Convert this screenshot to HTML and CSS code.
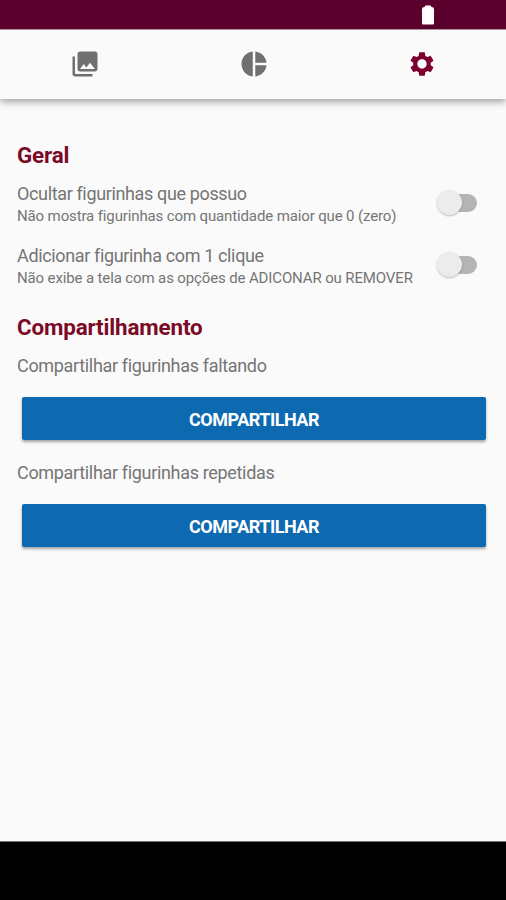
FILE: index.html
```
<!DOCTYPE html>
<html lang="pt-BR">
<head>
    <meta charset="UTF-8">
    <meta name="viewport" content="width=device-width, initial-scale=1.0">
    <title>Configurações</title>
    <link rel="stylesheet" href="styles.css">
</head>
<body>
    <!-- Barra de status -->
    <div class="status-bar">
        <svg class="battery" viewBox="0 0 12 20"><path d="M3.500 0.500h5l1 1.500q2.500 0 2.500 2v14.500q0 1-1 1H1q-1 0-1-1V4q0-2 2.500-2z"/></svg>
    </div>

    <!-- Abas -->
    <nav class="tabs">
        <a class="tab">
            <svg viewBox="0 0 24 24"><path d="M22 16V4c0-1.100-.9-2-2-2H8c-1.100 0-2 .9-2 2v12c0 1.100.9 2 2 2h12c1.100 0 2-.9 2-2zm-11-4l2.030 2.710L16 11l4 5H8l3-4zM2 6v14c0 1.100.9 2 2 2h14v-2H4V6H2z"/></svg>
        </a>
        <a class="tab">
            <svg viewBox="0 0 24 24"><path d="M11 2v20c-5.070-.5-9-4.790-9-10s3.930-9.500 9-10zm2.030 0v8.990H22c-.47-4.740-4.240-8.520-8.970-8.990zm0 11.010V22c4.740-.47 8.500-4.250 8.970-8.990h-8.970z"/></svg>
        </a>
        <a class="tab active">
            <svg viewBox="0 0 24 24"><path d="M19.430 12.980c.04-.32.07-.64.07-.98s-.03-.66-.07-.98l2.110-1.650c.19-.15.24-.42.12-.64l-2-3.460c-.12-.22-.39-.3-.61-.22l-2.490 1c-.52-.4-1.080-.73-1.690-.98l-.38-2.650C14.460 2.180 14.250 2 14 2h-4c-.25 0-.46.18-.49.42l-.38 2.650c-.61.25-1.170.59-1.690.98l-2.490-1c-.23-.09-.49 0-.61.22l-2 3.460c-.13.22-.07.49.12.64l2.110 1.650c-.04.32-.07.65-.07.98s.03.66.07.98l-2.110 1.650c-.19.15-.24.42-.12.64l2 3.460c.12.22.39.3.61.22l2.490-1c.52.4 1.080.73 1.690.98l.38 2.650c.03.24.24.42.49.42h4c.25 0 .46-.18.49-.42l.38-2.650c.61-.25 1.170-.59 1.690-.98l2.490 1c.23.09.49 0 .61-.22l2-3.460c.12-.22.07-.49-.12-.64l-2.110-1.650zM12 16c-2.210 0-4-1.790-4-4s1.790-4 4-4 4 1.790 4 4-1.790 4-4 4z"/></svg>
        </a>
    </nav>

    <!-- Configurações -->
    <main class="settings">
        <h2>Geral</h2>
        <div class="option">
            <div class="option-text">
                <p class="option-title">Ocultar figurinhas que possuo</p>
                <p class="option-info">Não mostra figurinhas com quantidade maior que 0 (zero)</p>
            </div>
            <span class="switch"></span>
        </div>
        <div class="option">
            <div class="option-text">
                <p class="option-title">Adicionar figurinha com 1 clique</p>
                <p class="option-info">Não exibe a tela com as opções de ADICONAR ou REMOVER</p>
            </div>
            <span class="switch"></span>
        </div>

        <h2>Compartilhamento</h2>
        <p class="share-label">Compartilhar figurinhas faltando</p>
        <button class="share-button">COMPARTILHAR</button>
        <p class="share-label">Compartilhar figurinhas repetidas</p>
        <button class="share-button">COMPARTILHAR</button>
    </main>

    <!-- Barra de navegação -->
    <div class="nav-bar"></div>
</body>
</html>
```
FILE: styles.css
```
* {
    box-sizing: border-box;
}
body {
    font-family: Roboto, sans-serif;
    margin: 0;
    height: 900px;
    display: flex;
    flex-direction: column;
    background-color: #fafafa;
    color: #757575;
}

/* Barra de status */
.status-bar {
    height: 29px;
    padding: 5px 72px 0 0;
    display: flex;
    justify-content: flex-end;
    align-items: flex-start;
    background-color: #5c002e;
}
.battery {
    width: 12px;
    height: 20px;
    fill: #fff;
}

/* Abas */
.tabs {
    display: flex;
    height: 70px;
    border-top: 1px solid #a98d9b;
    background-color: #fafafa;
    box-shadow: 0 3px 7px rgba(0, 0, 0, 0.35);
}
.tab {
    flex: 1;
    display: flex;
    justify-content: center;
    align-items: center;
    padding: 0 0 1px 1px;
}
.tab svg {
    width: 30px;
    height: 30px;
    fill: #707070;
}
.tab.active svg {
    width: 28px;
    height: 28px;
    fill: #7b0031;
}

/* Lista de opções */
.settings {
    flex: 1;
    padding: 43px 17px 0;
}
h2 {
    margin: 0;
    height: 27px;
    font-size: 22.4px;
    line-height: 27px;
    font-weight: bold;
    letter-spacing: -0.15px;
    color: #7a0a26;
}
.option {
    display: flex;
    justify-content: space-between;
    height: 62px;
    padding-top: 14px;
}
.option p {
    margin: 0;
    white-space: nowrap;
}
.option .option-title {
    font-size: 18px;
    line-height: 22px;
    letter-spacing: -0.36px;
}
.option .option-info {
    font-size: 15px;
    line-height: 22px;
    letter-spacing: -0.13px;
}
.option + h2 {
    margin-top: 21px;
}

/* Chave liga/desliga */
.switch {
    position: relative;
    width: 36px;
    height: 18px;
    margin: 11px 12px 0 0;
    border-radius: 9px;
    background-color: #b4b4b4;
}
.switch::before {
    content: "";
    position: absolute;
    left: -4px;
    top: -4px;
    width: 25px;
    height: 25px;
    border-radius: 50%;
    background-color: #ececec;
    box-shadow: 0 1px 2px rgba(0, 0, 0, 0.25);
}

/* Compartilhar */
.share-label {
    margin: 21px 0 20px;
    font-size: 18px;
    line-height: 23px;
    letter-spacing: -0.33px;
}
h2 + .share-label {
    margin-top: 13px;
}
.share-button {
    display: block;
    width: 464px;
    height: 43px;
    margin: 0 0 0 5px;
    padding: 0;
    border: none;
    border-radius: 2px;
    background-color: #0d69b0;
    box-shadow: 0 2px 3px rgba(0, 0, 0, 0.35);
    color: #fff;
    font-family: inherit;
    font-size: 18px;
    font-weight: bold;
    line-height: 45px;
    letter-spacing: -0.5px;
}

/* Barra de navegação */
.nav-bar {
    height: 59px;
    border-top: 1px solid #777;
    background-color: #000;
}
```
